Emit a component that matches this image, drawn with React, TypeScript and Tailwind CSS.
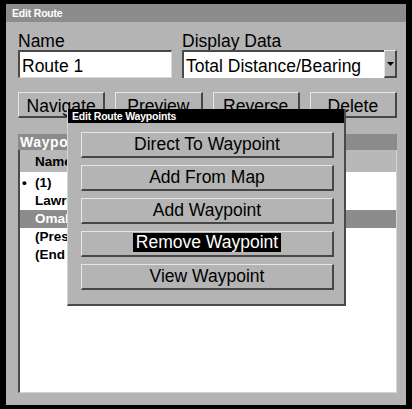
import React from "react";

const F = "font-['Liberation_Sans',Arial,Helvetica,sans-serif]";

function RaisedButton({ children, pad }: { children: React.ReactNode; pad: string }) {
  return (
    <div className={`h-[26px] bg-[#b4b4b4] border-t border-l border-t-[#e6e6e6] border-l-[#e6e6e6] border-r-2 border-b-2 border-r-[#464646] border-b-[#464646] flex items-center justify-center text-[17.5px] leading-[20px] text-black ${pad}`}>
      {children}
    </div>
  );
}

const rows = [
  { bullet: true, name: "(1)", sel: false },
  { bullet: false, name: "Lawrence", sel: false },
  { bullet: false, name: "Omaha", sel: true },
  { bullet: false, name: "(Press ENT)", sel: false },
  { bullet: false, name: "(End of route)", sel: false },
];

export default function App() {
  return (
    <div className={`${F} relative w-[412px] h-[409px] bg-black pt-[4px] px-[6px] pb-[4px]`}>
      <div className="h-full bg-[#b4b4b4] flex flex-col">
        <div className="h-[18px] bg-[#8c8c8c] text-white font-bold text-[10.5px] leading-[18px] pl-[6px] tracking-[-0.2px]">
          Edit Route
        </div>
        <div className="flex-1 flex flex-col pl-[12px] pr-[9px] pb-[12px]">
          <div className="mt-[10px] grid grid-cols-[154px_1fr] gap-x-[10px] text-black text-[17.5px]">
            <div className="h-[18px] leading-[18px]">Name</div>
            <div className="h-[18px] leading-[18px]">Display Data</div>
            <div className="h-[28px] bg-white border-t-2 border-l-2 border-[#4a4a4a] border-r border-b border-r-[#d8d8d8] border-b-[#d8d8d8] leading-[24px] pt-[2px] pl-[2px]">
              Route 1
            </div>
            <div className="h-[28px] flex">
              <div className="flex-1 bg-white border-t-2 border-l-2 border-[#4a4a4a] leading-[24px] pt-[2px] pl-[2px] whitespace-nowrap">
                Total Distance/Bearing
              </div>
              <div className="w-[13px] bg-[#b4b4b4] border-t border-l border-[#e6e6e6] border-r-2 border-b-2 border-r-[#464646] border-b-[#464646] flex items-center justify-center">
                <svg width="7" height="4" viewBox="0 0 7 4">
                  <polygon points="0,0 7,0 3.5,4" fill="#000" />
                </svg>
              </div>
            </div>
          </div>
          <div className="mt-[14px] grid grid-cols-4 gap-x-[10px]">
            <RaisedButton pad="pt-[2px]">Navigate</RaisedButton>
            <RaisedButton pad="pt-[2px]">Preview</RaisedButton>
            <RaisedButton pad="pt-[2px]">Reverse</RaisedButton>
            <RaisedButton pad="pt-[2px]">Delete</RaisedButton>
          </div>
          <div className="mt-[16px] h-[16px] bg-[#8b8b8b] text-white font-bold text-[14px] leading-[16px] pl-[2px] tracking-[0.6px]">
            Waypoints
          </div>
          <div className="flex-1 bg-white border-l-2 border-[#4a4a4a] border-r border-b border-r-[#d4d4d4] border-b-[#d4d4d4] font-bold text-[13.5px] text-black">
            <div className="h-[22px] bg-[#b8b8b8] grid grid-cols-[112px_108px_1fr] pl-[15px] leading-[22px] pt-[1px]">
              <span>Name</span>
              <span>Distance</span>
              <span>Bearing</span>
            </div>
            <div className="pt-[2px]">
              {rows.map((r) => (
                <div
                  key={r.name}
                  className={`h-[18px] leading-[18px] flex ${r.sel ? "bg-[#8c8c8c] text-white" : ""}`}
                >
                  <span className="w-[15px] pl-[2px]">{r.bullet ? "•" : ""}</span>
                  <span className="whitespace-nowrap">{r.name}</span>
                </div>
              ))}
            </div>
          </div>
        </div>
      </div>

      <div className="absolute left-[67px] top-[109px] w-[279px] h-[197px] bg-[#b4b4b4] border-l border-l-[#d6d6d6] border-r-2 border-b-2 border-r-[#4a4a4a] border-b-[#4a4a4a] flex flex-col">
        <div className="h-[14px] bg-black text-white font-bold text-[10.5px] leading-[14px] pl-[4px] tracking-[-0.2px] whitespace-nowrap">
          Edit Route Waypoints
        </div>
        <div className="pt-[9px] pl-[13px] pr-[10px] flex flex-col gap-[7px]">
          <RaisedButton pad="pb-[2px]">Direct To Waypoint</RaisedButton>
          <RaisedButton pad="pb-[2px]">Add From Map</RaisedButton>
          <RaisedButton pad="pb-[2px]">Add Waypoint</RaisedButton>
          <RaisedButton pad="pb-[2px]">
            <span className="bg-black text-white px-[3px] leading-[19px]">Remove Waypoint</span>
          </RaisedButton>
          <RaisedButton pad="pb-[2px]">View Waypoint</RaisedButton>
        </div>
      </div>
    </div>
  );
}
